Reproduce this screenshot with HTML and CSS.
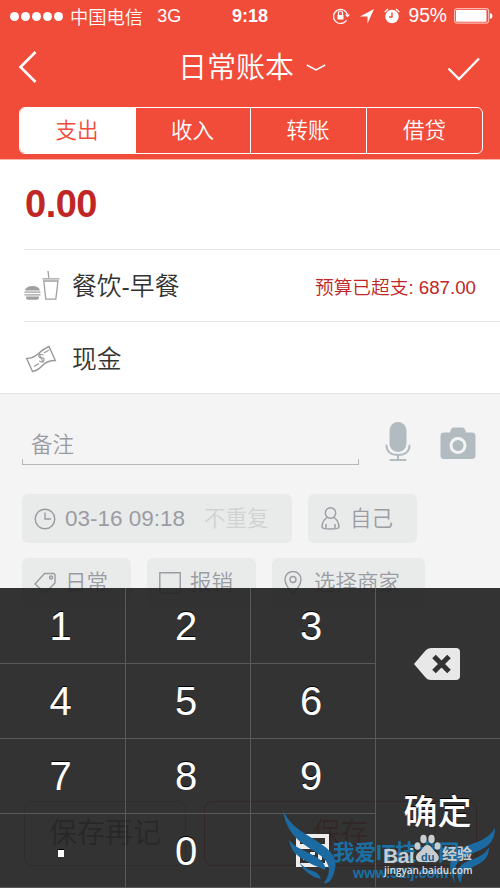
FILE: index.html
```html
<!DOCTYPE html>
<html lang="zh-CN">
<head>
<meta charset="utf-8">
<title>日常账本</title>
<link rel="stylesheet" href="styles.css">
</head>
<body>
<div class="screen">
  <header class="top">
    <div class="status">
      <div class="status-left">
        <div class="signal"><i></i><i></i><i></i><i></i><i></i></div>
        <span class="carrier">中国电信</span><span class="net">3G</span>
      </div>
      <b class="clock">9:18</b>
      <div class="status-right">
        <svg class="lock" width="19" height="18" viewBox="0 0 19 18" fill="none" stroke="#fff"><path d="M14.5 13.2A7 7 0 1 1 15.5 8.500" stroke-width="1.2"/><path d="M13 7.500h5L15.500 10.500z" fill="#fff" stroke="none"/><path d="M5.500 8h6v4.500h-6z" fill="#fff" stroke="none"/><path d="M6.500 8V6a2 2 0 0 1 4 0v2" stroke-width="1.200"/></svg>
        <svg class="arrow" width="14" height="15" viewBox="0 0 14 15"><path d="M14 0 7.500 14.500V7.500H0z" fill="#fff"/></svg>
        <svg class="alarm" width="16" height="16" viewBox="0 0 16 16" fill="none"><circle cx="8" cy="8.500" r="6.700" fill="#fff"/><path d="M8 4.500V9H5" stroke="#f14c3a" stroke-width="1.400"/><path d="M.7 4 4 1M12 1l3.300 3" stroke="#fff" stroke-width="1.200"/></svg>
        <span class="percent">95%</span>
        <svg class="battery" width="39" height="16" viewBox="0 0 39 16"><rect x=".6" y=".6" width="34" height="14.500" rx="2.500" fill="none" stroke="#fbb9b1" stroke-width="1.200"/><rect x="2" y="2" width="30.500" height="11.700" rx="1" fill="#fff"/><path d="M36 5q2.500.6 2.500 3T36 11z" fill="#fff"/></svg>
      </div>
    </div>
    <nav class="navbar">
      <svg width="20" height="34" viewBox="0 0 20 34" fill="none" stroke="#fff" stroke-width="2.600"><path d="M17.500 2 2.500 17l15 15"/></svg>
      <h1 class="title"><span>日常账本</span><svg width="20" height="8" viewBox="0 0 20 8" fill="none" stroke="#fff" stroke-width="1.500"><path d="M.8 1 10 6l9.200-5"/></svg></h1>
      <svg class="check" width="33" height="24" viewBox="0 0 33 24" fill="none" stroke="#fff" stroke-width="2.300"><path d="M1.500 11.500 12 22 32 1.500"/></svg>
    </nav>
    <div class="tabs"><span class="tab active">支出</span><span class="tab">收入</span><span class="tab">转账</span><span class="tab">借贷</span></div>
  </header>
  <main class="entry">
    <div class="row amount">0.00</div>
    <div class="row">
      <svg class="row-icon" width="36" height="30" viewBox="0 0 36 30" fill="none" stroke="#a0a0a0"><path d="M1 19.500q1-4.500 7.500-4.500t7.500 4.500zM2 25.500h13q0 3.200-2 3.200H4q-2 0-2-3.200z" fill="#a0a0a0" stroke="none"/><path d="M.5 21.200h16M.5 23.800h16" stroke-width="1.300"/><path d="M18.500 7.800h17M24.800 7 24 0M19.800 10l2 18.200h10L34 10z" stroke-width="1.300"/></svg>
      <span class="name">餐饮-早餐</span>
      <span class="budget">预算已超支: <em>687.00</em></span>
    </div>
    <div class="row last">
      <svg class="row-icon cash" width="36" height="30" viewBox="0 0 36 30" fill="none" stroke="#999" stroke-width="1.400"><path d="M2.700 13.500Q9 13.500 14.500 8.500T25 1.500L31.300 15.500Q23 15.500 18.500 20.500T8.500 26.500z"/><path d="M19.500 10.500q-1.500-2-4-.8-2 1.500.4 3 3-.4 4 1.100 1 2-1.700 2.900-2 .5-3-.9M15 8.300l4.300 9.500M10 21.500l5-3M20 8l5-3" stroke-width="1.100"/></svg>
      <span class="name">现金</span>
    </div>
  </main>
  <section class="details">
    <div class="memo">
      <div class="memo-field"><span>备注</span></div>
      <svg class="mic" width="26" height="40" viewBox="0 0 26 40" fill="none" stroke="#b2bbbf" stroke-width="2"><rect x="4.500" y="0" width="17" height="30" rx="8.500" fill="#b2bbbf" stroke="none"/><path d="M1.500 23.500c0 6 4.500 9.500 11.500 9.500s11.500-3.500 11.500-9.500M13 33v5M5.500 38h15" stroke-linecap="round"/></svg>
      <svg class="camera" width="36" height="33" viewBox="0 0 36 33"><path d="M4 5.500h6l1-3Q11.700.5 13.500.5h9q1.800 0 2.500 2l1 3h6q3.500 0 3.500 3.500v19.500q0 3.500-3.500 3.500H4q-3.500 0-3.500-3.500V9Q.5 5.500 4 5.500z" fill="#b2bbbf"/><circle cx="18" cy="18.500" r="7" fill="#b2bbbf" stroke="#f4f4f4" stroke-width="3"/></svg>
    </div>
    <div class="chips">
      <div class="chip date"><svg width="22" height="22" viewBox="0 0 22 22"><circle cx="11" cy="11" r="9.800"/><path d="M11 4.500V11h6"/></svg><span class="when">03-16 09:18</span><span class="repeat">不重复</span></div>
      <div class="chip person"><svg width="20" height="23" viewBox="0 0 20 23"><circle cx="9.500" cy="6" r="5.200"/><path d="M6 10.500Q1 14 1 20q0 2 8.500 2t8.500-2q0-6-5-9.500M5 17v4M14 17v4"/></svg><span>自己</span></div>
    </div>
    <div class="chips second">
      <div class="chip tag"><svg width="22" height="22" viewBox="0 0 22 22"><path d="m1 12 9.500-10.500H20l1 1V11L11 21z"/><circle cx="17" cy="5.500" r="1.500"/></svg><span>日常</span></div>
      <div class="chip claim"><svg width="22" height="22" viewBox="0 0 22 22"><path d="M.8.8h20.400v20.400H.8z"/></svg><span>报销</span></div>
      <div class="chip shop"><svg width="18" height="24" viewBox="0 0 18 24"><path d="M9 23Q1 14 1 8.500a8 8 0 0 1 16 0Q17 14 9 23z"/><circle cx="9" cy="8.500" r="3"/></svg><span>选择商家</span></div>
    </div>
  </section>
  <div class="save-bar"><span class="save again">保存再记</span><span class="save primary">保存</span></div>
  <div class="keypad">
    <span class="key">1</span><span class="key">2</span><span class="key">3</span>
    <span class="key side"><svg width="46" height="32" viewBox="0 0 46 32"><path d="M0 16 11.500 2.500Q13.500 0 17 0h25q4 0 4 4v24q0 4-4 4H17q-3.500 0-5.500-2.500z" fill="#e8e8e8"/><path d="m20 8.500 15 15m0-15-15 15" stroke="#323232" stroke-width="5"/></svg></span>
    <span class="key">4</span><span class="key">5</span><span class="key">6</span>
    <span class="key">7</span><span class="key">8</span><span class="key">9</span>
    <span class="key side ok">确定</span>
    <span class="key dot"><i></i></span><span class="key">0</span>
    <span class="key calc-key"><svg width="33" height="33" viewBox="0 0 33 33"><path d="M0 0h33v33H0z" fill="#eee"/><path d="M4 4h25v6H4zM4 15h25v14H4z" fill="#323232"/><path d="M7 18h4v3H7zM14 18h5v3h-5zM7 23h4v3H7zM14 23h5v3h-5zM22 18h4v8h-4z" fill="#eee"/></svg></span>
  </div>
  <div class="watermark">
    <svg class="wings" width="216" height="78" viewBox="0 0 216 78" fill="#1b6ba2"><path d="M1 0C10 17 23 22 36 31 49 39 56 47 53 58 51 68 46 74 42 72 49 62 49 53 39 45 25 34 6 29 1 0z"/><path d="M7 29C14 38 24 39 34 46 42 51 44 55 43 59 38 56 34 56 26 51 16 45 10 43 7 29z"/><path d="M17 51Q23 58 31 60q6 2 8 8-15-3-22-17z"/><path d="M213 17C206 29 194 31 182 36 168 43 164 55 173 72 170 57 174 50 186 44 202 38 213 34 213 17z"/><path d="M207 36C202 46 192 47 184 51 174 56 173 65 179 72 179 62 184 59 191 56 202 51 207 46 207 36z"/></svg>
    <span class="site">我爱IT技术网</span><span class="url">www.52ij.com</span>
    <div class="baidu"><b>Bai</b><svg width="27" height="29" viewBox="0 0 27 29" fill="#c8cdd0"><ellipse cx="3.500" cy="12" rx="3" ry="3.800"/><ellipse cx="9.500" cy="5" rx="3.200" ry="4.300"/><ellipse cx="17.500" cy="5" rx="3.200" ry="4.300"/><ellipse cx="23.500" cy="12" rx="3" ry="3.800"/><path d="M13.500 11c4 0 5 5 9 8 5 5 1 10-4 9H8c-6 1-8-5-4-9 5-3 5-8 9.500-8z"/></svg><span class="du">du</span><span class="jy">经验</span></div>
    <span class="baidu-url">jingyan.baidu.com</span>
  </div>
</div>
</body>
</html>
```
FILE: styles.css
```css
* { box-sizing: border-box; }
body { margin: 0; font-family: "Liberation Sans", "Noto Sans CJK SC", sans-serif; }
svg { display: block; flex: none; }
.screen { position: relative; width: 500px; height: 888px; overflow: hidden; background: #f4f4f4; }
.top { height: 160px; background: #f14c3a; color: #fff; border-bottom: 1px solid #f9b4aa; }
.status { position: relative; display: flex; height: 32px; align-items: center; justify-content: space-between; padding: 0 7px 0 10px; font-size: 18px; }
.status-left, .status-right { display: flex; align-items: center; font-weight: 350; }
.signal { display: flex; gap: 2px; }
.signal i { width: 9px; height: 9px; border-radius: 50%; background: #fff; }
.carrier { margin-left: 7px; padding-bottom: 1px; font-size: 18.300px; }
.net { margin-left: 14px; }
.clock { position: absolute; left: 232px; font-size: 18px; }
.lock { margin-right: 9px; }
.arrow { margin-right: 10px; }
.alarm { margin-right: 8px; }
.percent { font-size: 19.300px; margin-right: 7px; }
.navbar { display: flex; justify-content: space-between; align-items: center; height: 75px; padding: 0 20px 5px 18px; }
.title { display: flex; align-items: center; gap: 12px; margin: 0 0 0 19px; font-size: 29px; font-weight: 350; }
.title span { padding-bottom: 4px; }
.title svg { margin-top: 2px; }
.check { margin-top: 4px; }
.tabs { display: grid; grid-template-columns: 116px 115px 116px 116px; width: 464px; height: 47px; margin-left: 19px; border: 1.500px solid #fff; border-radius: 6px; overflow: hidden; }
.tab { display: flex; align-items: center; justify-content: center; padding: 0 1px 5px 0; font-size: 21.500px; font-weight: 350; border-right: 1px solid #fff; }
.tab:last-child { border: 0; }
.tab.active { background: #fff; color: #f14c3a; }
.entry { height: 234px; padding-left: 24px; background: #fff; border-bottom: 1px solid #e3e3e3; }
.row { display: flex; align-items: center; height: 72px; border-bottom: 1px solid #e6e6e6; }
.row.amount { height: 90px; padding-left: 1px; font-size: 38px; letter-spacing: -.5px; font-weight: 700; color: #c02626; }
.row.last { border: 0; }
.cash { margin-top: 3px; }
.name { margin: -3px 0 0 12px; font-size: 24.800px; font-weight: 350; color: #333; }
.budget { margin: -1px 24px 0 auto; font-size: 18.700px; font-weight: 350; color: #c02626; }
.budget em { font-style: normal; }
.details { padding: 27px 22px 0; color: #9b9ca3; }
.memo { display: flex; height: 44px; }
.memo-field { position: relative; width: 337px; height: 44px; padding: 6px 0 0 9px; font-size: 21.500px; font-weight: 350; border-bottom: 1.500px solid #b5b7ba; }
.memo-field::after { content: ""; position: absolute; left: 0; right: 0; bottom: 0; height: 5px; border: solid #b5b7ba; border-width: 0 1px; }
.mic { margin: 1px 0 0 26px; }
.camera { margin: 6px 0 0 29px; }
.chips { display: flex; gap: 16px; margin-top: 29px; }
.chips.second { margin-top: 15px; }
.chip { display: flex; align-items: center; height: 49px; padding-left: 12px; border-radius: 6px; background: #e8ebea; font-size: 21.500px; font-weight: 350; }
.chip svg { fill: none; stroke: #9b9ca3; stroke-width: 1.400; }
.chip span { padding-bottom: 4px; }
.date { width: 270px; }
.chip .when { margin-left: 8px; padding: 1px 0 0; font-size: 22.500px; }
.chip .repeat { margin-left: 19px; color: #d0d2d2; }
.person { width: 109px; padding-left: 13px; }
.chip span:nth-child(2) { margin-left: 9px; }
.tag, .claim { width: 109px; }
.shop { width: 153px; }
.chip.shop span { margin-left: 12px; }
.save-bar { position: absolute; left: 24px; top: 801px; display: flex; gap: 18px; }
.save { display: flex; align-items: center; justify-content: center; height: 65px; padding-bottom: 5px; border: 1px solid #aaa; border-radius: 8px; font-size: 28px; font-weight: 350; color: #555; }
.again { width: 162px; }
.primary { width: 273px; color: #f14c3a; border-color: #f14c3a; }
.keypad { position: absolute; inset: 588px 0 0; display: grid; grid-template-columns: 126px 125px 125px 124px; grid-template-rows: 76px 75px 75px 74px; background: rgba(36,36,36,.935); color: #fff; }
.key { display: flex; align-items: center; justify-content: center; padding: 1px 4px 0 0; border: solid #595959; border-width: 0 1px 1px 0; font-size: 40px; text-shadow: 0 -1px #000; }
.side { grid-column: 4; grid-row: span 2; border-right: 0; padding: 1px 2px 0 0; }
.ok { font-size: 34px; font-weight: 500; padding: 0 1px 8px 0; }
.dot { padding: 6px 4px 0 0; }
.dot i { width: 6px; height: 7px; background: #fff; box-shadow: 0 -1px #000; }
.calc-key { padding: 0 1px 0 0; }
.watermark { position: absolute; left: 282px; top: 811px; width: 218px; height: 77px; }
.wings, .site, .url, .baidu, .baidu-url { position: absolute; }
.wings { left: 0; top: 0; }
.site { left: 51px; top: 26px; font-size: 21.500px; line-height: 32px; font-weight: 700; color: #1c6fa5; white-space: nowrap; }
.url { left: 71px; top: 54px; font-size: 14.500px; font-weight: 700; color: #1c6fa5; }
.baidu { left: 101px; top: 24px; display: flex; align-items: flex-end; height: 33px; color: #c8cdd0; }
.baidu b { font-size: 21px; line-height: 24px; letter-spacing: -.5px; }
.baidu svg { position: absolute; left: 31px; top: -1px; }
.du { position: absolute; left: 38px; top: 16px; font-size: 11px; font-weight: 700; color: #1c5f8c; }
.jy { position: absolute; left: 59px; top: 7px; font-size: 15px; font-weight: 700; white-space: nowrap; }
.baidu-url { left: 102px; top: 52px; font-family: "Open Sans", sans-serif; font-size: 10px; font-weight: 600; color: #ddd; }
```
